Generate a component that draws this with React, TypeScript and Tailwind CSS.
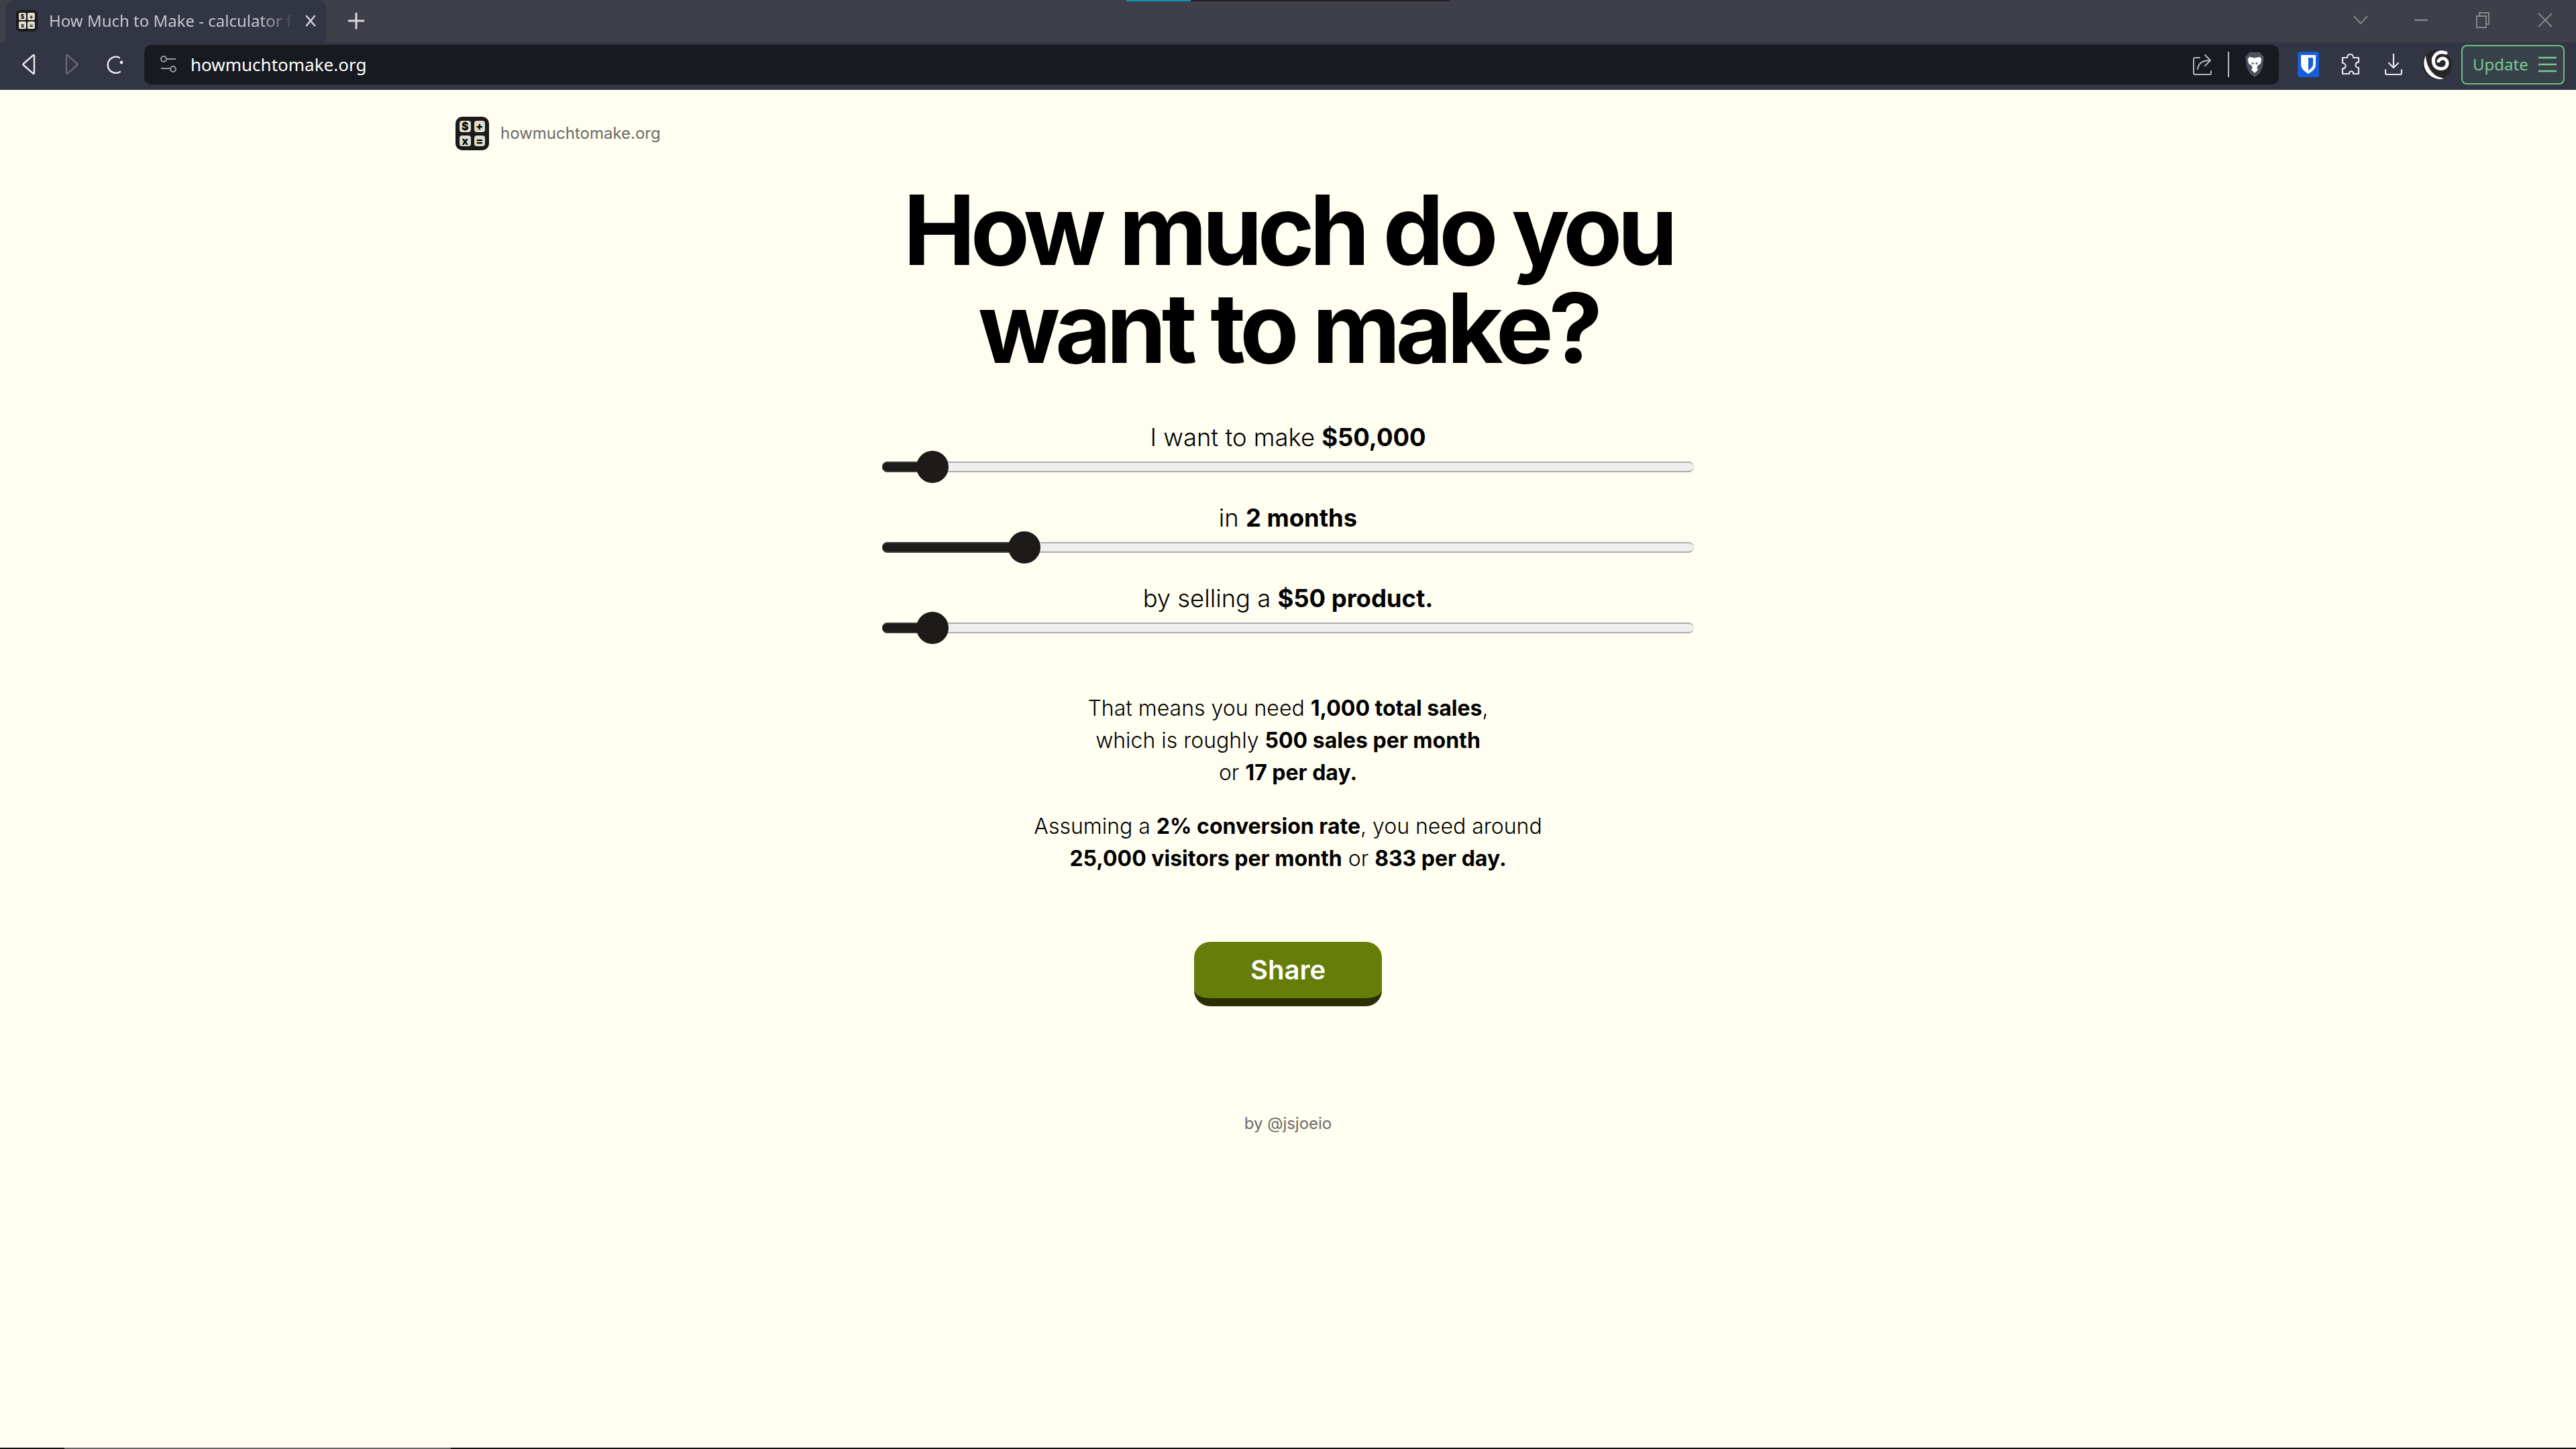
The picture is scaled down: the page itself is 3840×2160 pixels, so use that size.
const sliders = [
  { before: 'I want to make ', strong: '$50,000', left: 75 },
  { before: 'in ', strong: '2 months', left: 212 },
  { before: 'by selling a ', strong: '$50 product.', left: 75 },
]

function Calc({ small }: { small?: boolean }) {
  const cell = small
    ? 'flex items-center justify-center rounded-[2px] bg-[#dddcd0] text-[9px] leading-none font-bold text-black'
    : 'flex items-center justify-center rounded-[4px] bg-[#dddcd0] text-[16px] leading-none font-extrabold text-black'
  return (
    <div
      className={
        small
          ? 'grid h-[32px] w-[32px] shrink-0 grid-cols-2 grid-rows-2 gap-[2px] rounded-[6px] bg-[#1c1b19] p-[4px] font-["Inter",sans-serif]'
          : 'grid h-[50px] w-[50px] shrink-0 grid-cols-2 grid-rows-2 gap-[5px] rounded-[10px] bg-[#1c1b19] p-[6px] font-["Inter",sans-serif]'
      }
    >
      <span className={cell}>$</span>
      <span className={cell}>+</span>
      <span className={cell}>x</span>
      <span className={cell}>=</span>
    </div>
  )
}

function BrowserTop() {
  return (
    <div className='relative flex h-[63px] shrink-0 items-end bg-[#3f3f49] pl-[8px] font-["Noto_Sans",sans-serif]'>
      <div className="flex h-[63px] w-[479px] shrink-0 items-center rounded-t-[14px] bg-[#323543] pb-[2px] pl-[16px]">
        <Calc small />
        <span className="ml-[17px] w-[367px] text-[24px] leading-none whitespace-nowrap text-[#c6c7cd] [mask-image:linear-gradient(to_right,black_86%,transparent_100%)]">
          How Much to Make - calculator f
        </span>
        <svg className="ml-[13px] h-[20px] w-[20px]" viewBox="0 0 20 20" stroke="#d0d1d6" strokeWidth="2.6" strokeLinecap="round">
          <path d="M4 3l12 14M16 3L4 17" />
        </svg>
      </div>
      <svg className="mb-[19px] ml-[31px] h-[26px] w-[26px]" viewBox="0 0 26 26" stroke="#d8d8dc" strokeWidth="3" strokeLinecap="round">
        <path d="M13 2v22M2 13h22" />
      </svg>
      <div className="absolute top-0 left-[1679px] flex h-[2px] w-[482px] bg-[#222226]">
        <div className="h-[2px] w-[96px] bg-[#0a94b8]" />
      </div>
      <div className="absolute top-0 right-0 flex h-[60px] items-center pr-[35px]">
        <svg className="h-[16px] w-[22px]" viewBox="0 0 22 16" fill="none" stroke="#85858c" strokeWidth="2"><path d="M1 2l10 11L21 2" /></svg>
        <svg className="ml-[69px] h-[4px] w-[20px]" viewBox="0 0 20 4" stroke="#85858c" strokeWidth="2.4"><path d="M0 2h20" /></svg>
        <svg className="ml-[72px] h-[24px] w-[20px]" viewBox="0 0 20 24" fill="none" stroke="#85858c" strokeWidth="2"><path d="M1 6h14v17H1zM5 6V1h14v17h-4" /></svg>
        <svg className="ml-[72px] h-[22px] w-[22px]" viewBox="0 0 22 22" stroke="#85858c" strokeWidth="2"><path d="M1 1l20 20M21 1L1 21" /></svg>
      </div>
    </div>
  )
}

function BrowserToolbar() {
  return (
    <div className='flex h-[71px] shrink-0 items-center bg-[#323543] pb-[5px] font-["Noto_Sans",sans-serif]'>
      <svg className="ml-[32px] h-[30px] w-[22px]" viewBox="0 0 22 30" fill="none" stroke="#ecedf0" strokeWidth="2.4" strokeLinejoin="round">
        <path d="M19 2v26a1 1 0 01-1.6.7L3 16a1.5 1.5 0 010-2L17.4 1.3A1 1 0 0119 2z" />
      </svg>
      <svg className="ml-[42px] h-[30px] w-[22px]" viewBox="0 0 22 30" fill="none" stroke="#666873" strokeWidth="2.4" strokeLinejoin="round">
        <path d="M3 2v26a1 1 0 001.6.7L19 16a1.5 1.5 0 000-2L4.6 1.3A1 1 0 003 2z" />
      </svg>
      <svg className="ml-[41px] h-[30px] w-[27px]" viewBox="0 0 27 30" fill="none" stroke="#ecedf0" strokeWidth="2.4" strokeLinecap="round">
        <path d="M20 26a12 12 0 11-1-21" />
        <circle cx="22" cy="12" r="2.4" fill="#ecedf0" stroke="none" />
      </svg>
      <div className="ml-[29px] flex h-[59px] w-[3182px] shrink-0 items-center rounded-[10px] bg-[#181a22] pl-[24px]">
        <svg className="h-[28px] w-[24px]" viewBox="0 0 24 28" fill="none" stroke="#9a9ba2" strokeWidth="2">
          <circle cx="5" cy="6" r="4" />
          <path d="M10 6h13M1 20h13" />
          <circle cx="19" cy="21" r="4" />
        </svg>
        <span className="ml-[21px] text-[26px] leading-none text-white">howmuchtomake.org</span>
        <svg className="mr-[24px] ml-auto h-[32px] w-[28px]" viewBox="0 0 28 32" fill="none" stroke="#b4b5ba" strokeWidth="2" strokeLinecap="round" strokeLinejoin="round">
          <path d="M10 6H3a2 2 0 00-2 2v21a2 2 0 002 2h22a2 2 0 002-2v-3M7 23c1-8 7-13 18-13M18 2l8 8-8 8" />
        </svg>
        <div className="h-[38px] w-[2px] bg-[#b4b5ba]" />
        <svg className="mr-[20px] ml-[22px] h-[38px] w-[32px]" viewBox="0 0 32 44">
          <path d="M7 1h18l4 5 3 2-2 18-6 12-8 6-8-6-6-12L0 8l3-2z" fill="#4f505e" />
          <path d="M7 9l9 2 9-2 3 4-2 8-5 3-1 5 2 2-6 6-6-6 2-2-1-5-5-3-2-8z" fill="#fff" />
          <path d="M10 18l5 2-2 3zM22 18l-5 2 2 3z" fill="#4f505e" />
        </svg>
      </div>
      <div className="ml-[28px] flex h-[38px] w-[32px] shrink-0 items-center justify-center rounded-[4px] bg-[#175ddc]">
        <svg className="h-[30px] w-[24px]" viewBox="0 0 24 30">
          <path d="M1 1h22v14c0 7-6 11-11 14C7 26 1 22 1 15z" fill="#fff" />
          <path d="M12 5h7v10c0 4-4 7-7 9z" fill="#175ddc" />
        </svg>
      </div>
      <svg className="ml-[33px] h-[32px] w-[28px] shrink-0" viewBox="0 0 28 32" fill="none" stroke="#e6e7ea" strokeWidth="2.2" strokeLinejoin="round">
        <path d="M9 6c0-7 9-7 9 0h8v7c-6-1-6 8 0 8v9h-8c1-5-7-5-6 0H2v-8c6 1 6-8 0-8V6z" />
      </svg>
      <svg className="ml-[37px] h-[32px] w-[26px] shrink-0" viewBox="0 0 26 32" fill="none" stroke="#e6e7ea" strokeWidth="2.2" strokeLinecap="round" strokeLinejoin="round">
        <path d="M13 1v20M6 14l7 7 7-7M1 24v5a2 2 0 002 2h20a2 2 0 002-2v-5" />
      </svg>
      <svg className="ml-[30px] h-[46px] w-[44px] shrink-0" viewBox="0 0 44 46">
        <circle cx="22" cy="23" r="22" fill="#26262a" />
        <path d="M5 10C-3 26 8 45 28 45c6 0 2-2-3-3C14 38 6 26 5 10z" fill="#fff" />
        <path d="M35 6C22 1 14 12 17 22c3 10 19 10 20 0 1-8-9-11-13-4" fill="none" stroke="#fff" strokeWidth="5" strokeLinecap="round" />
      </svg>
      <div className="ml-[14px] flex h-[59px] w-[154px] shrink-0 items-center rounded-[8px] border-[2px] border-[#6fbd84] bg-[#37414a] pl-[15px]">
        <span className="w-[81px] text-[24px] leading-none text-[#7cc991]">Update</span>
        <svg className="ml-[17px] h-[24px] w-[27px]" viewBox="0 0 27 24" stroke="#7cc991" strokeWidth="2.4">
          <path d="M0 2h27M0 12h27M0 22h27" />
        </svg>
      </div>
    </div>
  )
}

function SliderRow({ before, strong, left }: { before: string; strong: string; left: number }) {
  return (
    <div className="flex h-[120px] flex-col items-center">
      <p className="h-[59px] text-[36.4px] leading-[59px] font-light text-black">
        {before}
        <strong className="font-bold">{strong}</strong>
      </p>
      <div className="relative mt-[6px] h-[16px] w-[1210px] rounded-full border-y-[2px] border-[#acacac] bg-[#efefef]">
        <div
          className="absolute top-[-2px] left-0 h-[16px] rounded-l-full border-y-[2px] border-[#3c3c3a] bg-[#1c1b19]"
          style={{ width: left + 10 }}
        />
        <div
          className="absolute top-[-18px] h-[48px] w-[48px] -translate-x-1/2 rounded-full bg-[#1c1b19]"
          style={{ left }}
        />
      </div>
    </div>
  )
}

export default function App() {
  return (
    <div className="flex h-[2160px] w-[3840px] flex-col overflow-hidden bg-[#fffef0]">
      <BrowserTop />
      <BrowserToolbar />
      <main className='flex flex-1 flex-col items-center font-["Inter",sans-serif]'>
        <div className="mt-[40px] flex w-[2482px] items-center">
          <Calc />
          <span className="ml-[17px] text-[24px] leading-none text-[#6b6b6b]">howmuchtomake.org</span>
        </div>
        <h1 className="mt-[46px] text-center text-[144px] leading-[146px] font-bold tracking-[-0.05em] text-black">
          How much do you
          <br />
          want to make?
        </h1>
        <div className="mt-[61px] w-[1210px]">
          {sliders.map((s) => (
            <SliderRow key={s.strong} before={s.before} strong={s.strong} left={s.left} />
          ))}
        </div>
        <div className="mt-[49px] text-center text-[32px] leading-[48px] font-light text-black">
          <p>
            That means you need <strong className="font-bold">1,000 total sales</strong>,
            <br />
            which is roughly <strong className="font-bold">500 sales per month</strong>
            <br />
            or <strong className="font-bold">17 per day.</strong>
          </p>
          <p className="mt-[32px]">
            Assuming a <strong className="font-bold">2% conversion rate</strong>, you need around
            <br />
            <strong className="font-bold">25,000 visitors per month</strong> or{' '}
            <strong className="font-bold">833 per day.</strong>
          </p>
        </div>
        <button
          type="button"
          className="mt-[100px] h-[96px] w-[280px] rounded-[24px] border-b-[12px] border-[#2a2e00] bg-[#667d0a] text-[40px] leading-none font-semibold text-white"
        >
          Share
        </button>
        <p className="mt-[163px] text-[24px] leading-none text-[#6b6b6b]">by @jsjoeio</p>
      </main>
      <div className="flex h-[2px] shrink-0 bg-[#111111]">
        <div className="ml-[96px] h-[2px] w-[576px] bg-[#666666]" />
      </div>
    </div>
  )
}
